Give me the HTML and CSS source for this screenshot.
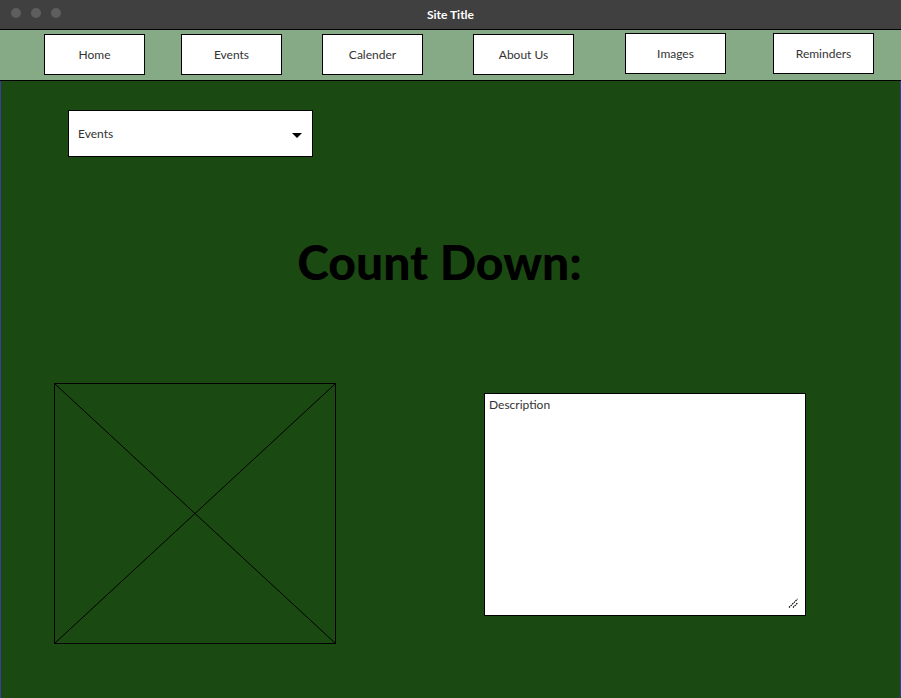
FILE: index.html
```html
<!DOCTYPE html>
<html lang="en">
<head>
  <meta charset="UTF-8" />
  <title>Site Title</title>
  <link rel="stylesheet" href="styles.css">
</head>
<body>
  <div class="window">
    <div class="titlebar">
      <div class="dots">
        <span class="dot"></span>
        <span class="dot"></span>
        <span class="dot"></span>
      </div>
      <div class="title">Site Title</div>
    </div>

    <nav class="nav">
      <a class="nav-btn b-home">Home</a>
      <a class="nav-btn b-events">Events</a>
      <a class="nav-btn b-cal">Calender</a>
      <a class="nav-btn b-about">About Us</a>
      <a class="nav-btn b-images up">Images</a>
      <a class="nav-btn b-rem up">Reminders</a>
    </nav>

    <main class="main">
      <div class="dropdown">
        <span>Events</span>
        <span class="caret"></span>
      </div>

      <h1 class="heading">Count Down:</h1>

      <div class="bottom">
        <div class="placeholder">
          <svg width="280" height="259" viewBox="0 0 280 259" preserveAspectRatio="none">
            <line x1="0" y1="0" x2="280" y2="259" stroke="#000" stroke-width="1" />
            <line x1="280" y1="0" x2="0" y2="259" stroke="#000" stroke-width="1" />
          </svg>
        </div>
        <div class="description">
          <span>Description</span>
          <svg class="grip" width="10" height="10" viewBox="0 0 10 10">
            <line x1="1" y1="9.5" x2="9.5" y2="1" stroke="#000" stroke-width="1.2" stroke-dasharray="1.5 0.8" />
            <line x1="5" y1="9.5" x2="9.5" y2="5" stroke="#000" stroke-width="1.2" stroke-dasharray="1.5 0.8" />
          </svg>
        </div>
      </div>
    </main>
  </div>
</body>
</html>
```

FILE: styles.css
```css
* {
  margin: 0;
  padding: 0;
  box-sizing: border-box;
}
html, body {
  width: 901px;
  height: 698px;
  overflow: hidden;
  background: #1b4912;
  font-family: 'Lato', sans-serif;
}

.window {
  display: flex;
  flex-direction: column;
  width: 901px;
  height: 698px;
}

.titlebar {
  position: relative;
  height: 29px;
  background: #404040;
  display: flex;
  align-items: center;
  justify-content: center;
}
.dots {
  position: absolute;
  left: 11px;
  top: 8px;
  display: flex;
  gap: 10px;
}
.dot {
  width: 10px;
  height: 10px;
  border-radius: 50%;
  background: #5e5e5e;
}
.title {
  color: #fff;
  font-size: 12px;
  font-weight: bold;
}

.nav {
  height: 52px;
  background: #87aa86;
  border-top: 1px solid #000;
  border-bottom: 1px solid #000;
  display: flex;
  align-items: flex-start;
  padding-top: 4px;
}
.nav-btn {
  width: 101px;
  height: 41px;
  background: #fff;
  border: 1px solid #000;
  display: flex;
  align-items: center;
  justify-content: center;
  font-size: 12px;
  color: #333;
}
.nav-btn.up { margin-top: -1px; }
.b-home { margin-left: 44px; }
.b-events { margin-left: 36px; }
.b-cal { margin-left: 40px; }
.b-about { margin-left: 50px; }
.b-images { margin-left: 51px; }
.b-rem { margin-left: 47px; }

.main {
  flex: 1;
  border-left: 1px solid #3b3ba8;
  border-right: 1px solid #3b3ba8;
  border-bottom-right-radius: 4px;
  padding-top: 29px;
}

.dropdown {
  margin-left: 67px;
  width: 245px;
  height: 47px;
  background: #fff;
  border: 1px solid #000;
  display: flex;
  align-items: center;
  justify-content: space-between;
  padding: 0 10px 0 9px;
  font-size: 12px;
  color: #333;
}
.caret {
  width: 0;
  height: 0;
  border-left: 5px solid transparent;
  border-right: 5px solid transparent;
  border-top: 5px solid #000;
  margin-top: 4px;
}

.heading {
  margin-top: 74px;
  text-align: center;
  font-size: 48px;
  line-height: 62px;
  font-weight: 900;
  color: #000;
  padding-right: 22px;
}

.bottom {
  display: flex;
  align-items: flex-start;
  margin-top: 90px;
}
.placeholder {
  margin-left: 53px;
  width: 282px;
  height: 261px;
  border: 1px solid #000;
  line-height: 0;
}
.description {
  position: relative;
  margin-left: 148px;
  margin-top: 10px;
  width: 322px;
  height: 223px;
  background: #fff;
  border: 1px solid #000;
  padding: 3px 4px;
  font-size: 12px;
  color: #333;
}
.grip {
  position: absolute;
  right: 7px;
  bottom: 7px;
}
```
